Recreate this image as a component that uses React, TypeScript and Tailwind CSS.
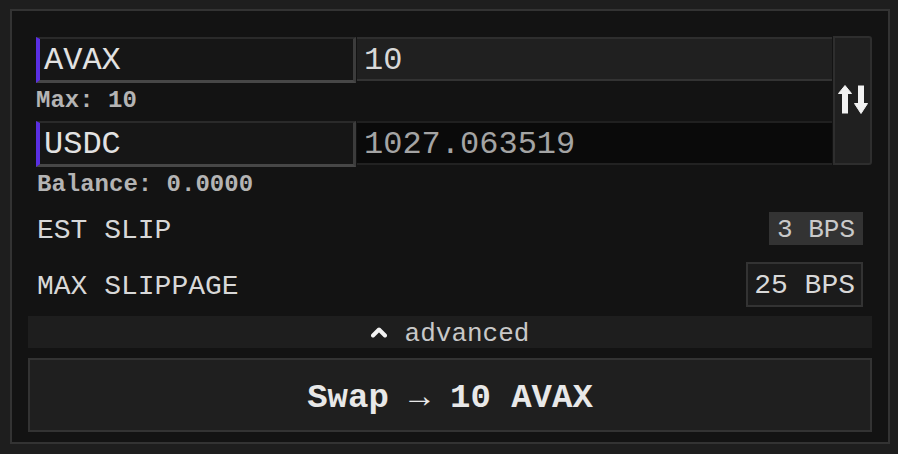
import React from 'react';

const mono = "font-['Liberation_Mono','Courier_New',monospace]";

function SwapIcon() {
  return (
    <svg width="32" height="31" viewBox="0 0 32 31" fill="#f2f2f2">
      <path d="M8 1.5 L1.5 9.5 L14.5 9.5 Z" stroke="#f2f2f2" strokeWidth="1" strokeLinejoin="round" />
      <rect x="5" y="9" width="6" height="20.5" />
      <rect x="21" y="1.5" width="6" height="19" />
      <path d="M17.5 19.5 L30.5 19.5 L24 29.5 Z" stroke="#f2f2f2" strokeWidth="1" strokeLinejoin="round" />
    </svg>
  );
}

function ChevronUp() {
  return (
    <svg width="16" height="12" viewBox="0 0 16 12">
      <polyline points="2,9.5 8,3.5 14,9.5" fill="none" stroke="#f2f2f2" strokeWidth="4" strokeLinecap="round" strokeLinejoin="round" />
    </svg>
  );
}

function TokenRow({ token, amount, dark }: { token: string; amount: string; dark?: boolean }) {
  return (
    <div className="flex h-[46px]">
      <div className="flex w-[320px] items-center border-l-4 border-t-2 border-r-[3px] border-b-[3px] border-l-[#5a2fe2] border-t-[#2a2a2a] border-r-[#3c3c3c] border-b-[#474747] bg-[#161616] pl-[4px] pt-[2px] text-[32px] leading-none text-[#e2e2e2]">
        {token}
      </div>
      <div
        className={
          dark
            ? 'ml-px flex h-[44px] flex-1 items-center border-t-2 border-b-2 border-t-[#202020] border-b-[#222] bg-[#0a0a0a] pl-[7px] pt-[3px] text-[32px] leading-none text-[#a4a4a4]'
            : 'ml-px flex h-[44px] flex-1 items-center border-t-2 border-b-2 border-t-[#2e2e2e] border-b-[#333] bg-[#202020] pl-[7px] pt-[3px] text-[32px] leading-none text-[#d8d8d8]'
        }
      >
        {amount}
      </div>
    </div>
  );
}

export default function App() {
  return (
    <div className={`min-h-[454px] bg-[#1e1e1e] pt-[9px] pl-[10px] pr-[8px] ${mono}`}>
      <div className="h-[435px] border-2 border-[#333] bg-[#131313] px-4 pt-4 pb-[10px]">
        <div className="pl-2">
          {/* token inputs + flip */}
          <div className="mt-[10px] flex">
            <div className="flex-1">
              <TokenRow token="AVAX" amount="10" />
              <div className="flex h-[38px] items-center pb-[2px] text-[24px] font-bold leading-none text-[#b4b4b4]">
                Max: 10
              </div>
              <TokenRow token="USDC" amount="1027.063519" dark />
            </div>
            <button className="-mt-px ml-px flex h-[129px] w-[39px] items-center justify-center rounded-r-[3px] border-2 border-[#2e2e2e] bg-[#202020] pb-[2px]">
              <SwapIcon />
            </button>
          </div>

          <div className="flex h-[33px] items-center pl-px pt-[2px] text-[24px] font-bold leading-none text-[#b4b4b4]">
            Balance: 0.0000
          </div>

          <div className="mt-[6px] flex h-[45px] items-center justify-between pr-[9px]">
            <span className="pl-px pt-[4px] text-[28px] leading-none text-[#d8d8d8]">EST SLIP</span>
            <span className="flex h-[33px] items-center bg-[#333] px-[8px] pt-[2px] text-[26px] leading-none text-[#cacaca]">
              3 BPS
            </span>
          </div>

          <div className="mt-[11px] flex h-[45px] items-center justify-between pr-[9px]">
            <span className="pl-px pt-[4px] text-[28px] leading-none text-[#d8d8d8]">MAX SLIPPAGE</span>
            <span className="flex h-[45px] items-center border-2 border-[#333] bg-[#1b1b1b] px-[6px] pt-[2px] text-[28px] leading-none text-[#d8d8d8]">
              25 BPS
            </span>
          </div>
        </div>

        <div className="mt-[9px] flex h-[32px] items-center justify-center gap-[18px] bg-[#1e1e1e]">
          <ChevronUp />
          <span className="pt-[4px] text-[26px] leading-none text-[#c8c8c8]">advanced</span>
        </div>

        <button className="mt-[10px] flex h-[74px] w-full items-center justify-center border-2 border-[#333] bg-[#1f1f1f] pt-[5px] text-[34px] font-bold leading-none text-[#e8e8e8]">
          Swap → 10 AVAX
        </button>
      </div>
    </div>
  );
}
